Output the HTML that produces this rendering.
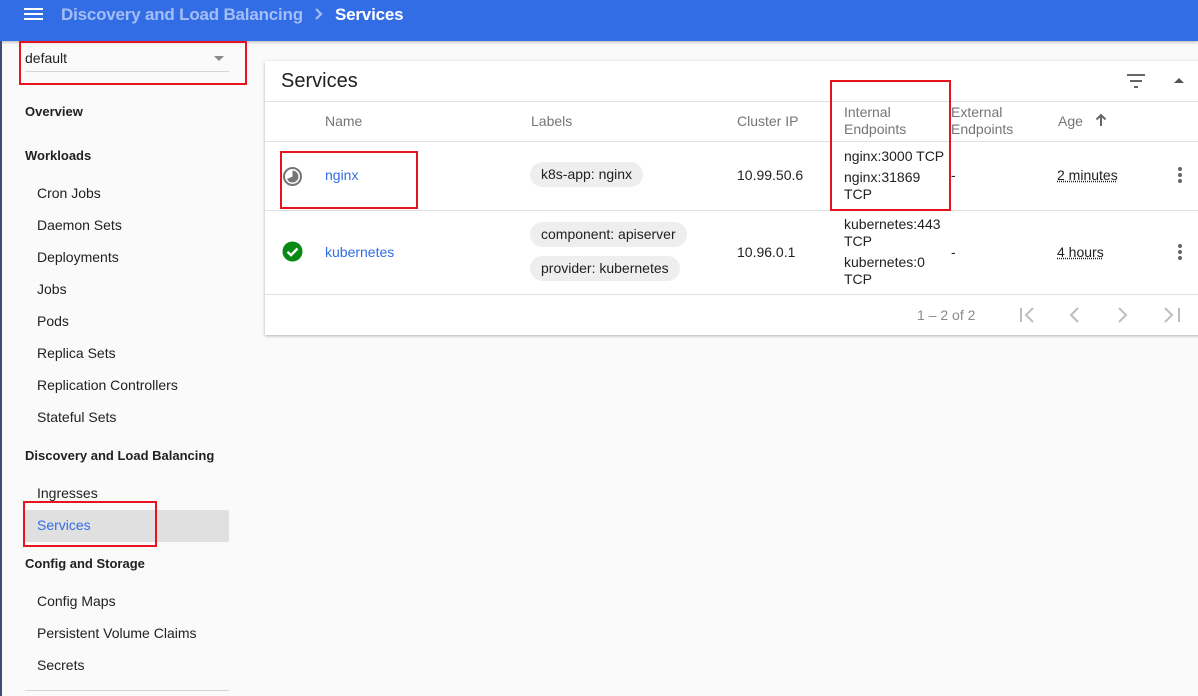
<!DOCTYPE html>
<html><head><meta charset="utf-8"><style>
*{box-sizing:border-box;margin:0;padding:0}
body{width:1198px;height:696px;overflow:hidden;background:#fafafa;font-family:"Liberation Sans",Arial,sans-serif;font-size:14px;color:#212121;position:relative}
.a{position:absolute;white-space:nowrap}
.hdr{position:absolute;left:0;top:0;width:1198px;height:41px;background:#326de6;box-shadow:0 1px 3px rgba(0,0,0,.3)}
.side{position:absolute;left:0;top:41px;width:2px;height:655px;background:#3e4c7a}
.sec{font-weight:bold;font-size:13px;color:#212121}
.it{font-size:14px;color:#212121}
.card{position:absolute;left:265px;top:61px;width:940px;height:274px;background:#fff;box-shadow:0 1px 3px rgba(0,0,0,.3)}
.hl{position:absolute;height:1px;background:#e0e0e0;left:0;width:940px}
.th{color:#757575;font-size:14px}
.chip{position:absolute;background:#eeeeee;border-radius:13px;height:25px;line-height:25px;padding:0 11px;font-size:14px;color:#212121;white-space:nowrap}
.red{position:absolute;border:2px solid #e8141d}
.lnk{color:#326de6}
.dot{text-decoration:underline dotted;}
.kb{position:absolute;width:4px}
.kb i{display:block;width:4px;height:4px;border-radius:2px;background:#666;margin-bottom:2px}
</style></head><body>
<div class="hdr">
 <div class="a" style="left:24px;top:8px;width:19px;height:2px;background:#fff"></div>
 <div class="a" style="left:24px;top:13px;width:19px;height:2px;background:#fff"></div>
 <div class="a" style="left:24px;top:18px;width:19px;height:2px;background:#fff"></div>
 <div class="a" style="left:61px;top:5px;font-size:17px;font-weight:bold;color:#a4bef5;letter-spacing:-0.2px">Discovery and Load Balancing</div>
 <svg class="a" style="left:313px;top:7px" width="12" height="14" viewBox="0 0 12 14"><path d="M3 2l5 5-5 5" fill="none" stroke="#a4bef5" stroke-width="2.2"/></svg>
 <div class="a" style="left:335px;top:5px;font-size:17px;font-weight:bold;color:#fff;letter-spacing:-0.2px">Services</div>
</div>
<div class="side"></div>
<div class="a" style="left:25px;top:50px;font-size:14px">default</div>
<div class="a" style="left:214px;top:56px;width:0;height:0;border-left:5px solid transparent;border-right:5px solid transparent;border-top:5px solid #8a8a8a"></div>
<div class="a" style="left:25px;top:71px;width:204px;height:1px;background:#d6d6d6"></div>
<div class="red" style="left:19px;top:41px;width:228px;height:44px"></div>

<div class="a sec" style="left:25px;top:104px">Overview</div>
<div class="a sec" style="left:25px;top:148px">Workloads</div>
<div class="a it" style="left:37px;top:185px">Cron Jobs</div>
<div class="a it" style="left:37px;top:217px">Daemon Sets</div>
<div class="a it" style="left:37px;top:249px">Deployments</div>
<div class="a it" style="left:37px;top:281px">Jobs</div>
<div class="a it" style="left:37px;top:313px">Pods</div>
<div class="a it" style="left:37px;top:345px">Replica Sets</div>
<div class="a it" style="left:37px;top:377px">Replication Controllers</div>
<div class="a it" style="left:37px;top:409px">Stateful Sets</div>
<div class="a sec" style="left:25px;top:448px">Discovery and Load Balancing</div>
<div class="a it" style="left:37px;top:485px">Ingresses</div>
<div class="a" style="left:25px;top:510px;width:204px;height:32px;background:#e0e0e0;border-radius:2px"></div>
<div class="a it" style="left:37px;top:517px;color:#326de6">Services</div>
<div class="red" style="left:23px;top:501px;width:134px;height:46px"></div>
<div class="a sec" style="left:25px;top:556px">Config and Storage</div>
<div class="a it" style="left:37px;top:593px">Config Maps</div>
<div class="a it" style="left:37px;top:625px">Persistent Volume Claims</div>
<div class="a it" style="left:37px;top:657px">Secrets</div>
<div class="a" style="left:25px;top:690px;width:204px;height:1px;background:#d6d6d6"></div>

<div class="card">
 <div class="a" style="left:16px;top:9px;font-size:20px;color:#212121">Services</div>
 <div class="a" style="left:862px;top:13px;width:18px;height:2px;background:#666"></div>
 <div class="a" style="left:865px;top:19px;width:12px;height:2px;background:#666"></div>
 <div class="a" style="left:869px;top:25px;width:4px;height:2px;background:#666"></div>
 <div class="a" style="left:909px;top:17px;width:0;height:0;border-left:5px solid transparent;border-right:5px solid transparent;border-bottom:5px solid #555"></div>
 <div class="hl" style="top:40px"></div>
 <div class="a th" style="left:60px;top:52px">Name</div>
 <div class="a th" style="left:266px;top:52px">Labels</div>
 <div class="a th" style="left:472px;top:52px">Cluster IP</div>
 <div class="a th" style="left:579px;top:43px;line-height:17px">Internal<br>Endpoints</div>
 <div class="a th" style="left:686px;top:43px;line-height:17px">External<br>Endpoints</div>
 <div class="a th" style="left:793px;top:52px">Age</div>
 <svg class="a" style="left:830px;top:52px" width="12" height="14" viewBox="0 0 12 14"><path d="M6 13V2M1.5 6.5L6 2l4.5 4.5" fill="none" stroke="#666" stroke-width="2"/></svg>
 <div class="hl" style="top:80px"></div>

 <svg class="a" style="left:17px;top:105px" width="21" height="21" viewBox="0 0 21 21"><circle cx="10.5" cy="10.5" r="8.5" fill="none" stroke="#757575" stroke-width="2"/><path d="M10.5 4.5 A6 6 0 1 1 5 13 L10.5 10.5Z" fill="#757575"/></svg>
 <div class="a lnk" style="left:60px;top:106px">nginx</div>
 <div class="chip" style="left:265px;top:101px">k8s-app: nginx</div>
 <div class="a" style="left:472px;top:106px">10.99.50.6</div>
 <div class="a" style="left:579px;top:87px;line-height:17px">nginx:3000 TCP</div>
 <div class="a" style="left:579px;top:108px;line-height:17px">nginx:31869<br>TCP</div>
 <div class="a" style="left:686px;top:106px">-</div>
 <div class="a dot" style="left:792px;top:106px">2 minutes</div>
 <div class="kb" style="left:913px;top:106px"><i></i><i></i><i></i></div>
 <div class="hl" style="top:149px"></div>

 <svg class="a" style="left:17px;top:180px" width="21" height="21" viewBox="0 0 21 21"><circle cx="10.5" cy="10.5" r="10" fill="#0a8a14"/><path d="M5.5 10.8 L9 14.2 L15.5 7.5" fill="none" stroke="#fff" stroke-width="2.4"/></svg>
 <div class="a lnk" style="left:60px;top:183px">kubernetes</div>
 <div class="chip" style="left:265px;top:161px">component: apiserver</div>
 <div class="chip" style="left:265px;top:195px">provider: kubernetes</div>
 <div class="a" style="left:472px;top:183px">10.96.0.1</div>
 <div class="a" style="left:579px;top:155px;line-height:17px">kubernetes:443<br>TCP</div>
 <div class="a" style="left:579px;top:193px;line-height:17px">kubernetes:0<br>TCP</div>
 <div class="a" style="left:686px;top:183px">-</div>
 <div class="a dot" style="left:792px;top:183px">4 hours</div>
 <div class="kb" style="left:913px;top:183px"><i></i><i></i><i></i></div>
 <div class="hl" style="top:233px"></div>

 <div class="a" style="left:652px;top:246px;color:#8a8a8a">1 – 2 of 2</div>
 <svg class="a" style="left:750px;top:243px" width="180" height="22" viewBox="0 0 180 22">
  <g fill="none" stroke="#bdbdbd" stroke-width="2">
   <path d="M6 4v14M18 4l-7 7 7 7"/>
   <path d="M63 4l-7 7 7 7"/>
   <path d="M104 4l7 7-7 7"/>
   <path d="M150 4l7 7-7 7M164 4v14"/>
  </g>
 </svg>
</div>
<div class="red" style="left:830px;top:80px;width:121px;height:131px"></div>
<div class="red" style="left:280px;top:151px;width:138px;height:58px"></div>
</body></html>
